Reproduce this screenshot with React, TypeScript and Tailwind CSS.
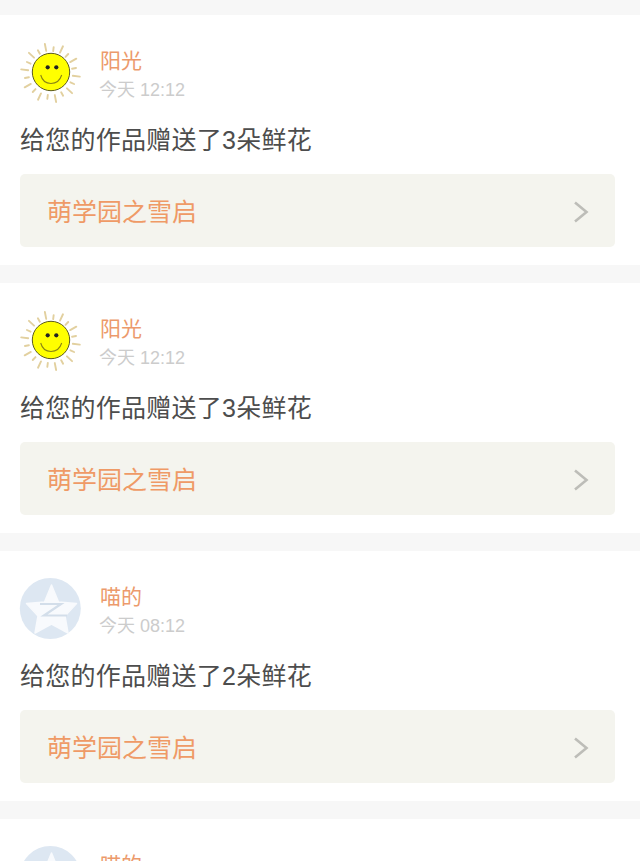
import React from 'react'

const cjk = "font-['Liberation_Sans','Noto_Sans_CJK_SC',sans-serif]"

function SunAvatar() {
  const rays = Array.from({ length: 20 }, (_, i) => {
    const a = (i * 18 + 7) * (Math.PI / 180)
    const long = i % 2 === 0
    const r1 = long ? 22.5 : 22
    const r2 = long ? 29.5 : 26
    return (
      <line
        key={i}
        x1={30.5 + Math.cos(a) * r1}
        y1={30 + Math.sin(a) * r1}
        x2={30.5 + Math.cos(a) * r2}
        y2={30 + Math.sin(a) * r2}
        stroke="#e2d09f"
        strokeWidth="1.9"
        strokeLinecap="round"
      />
    )
  })
  return (
    <svg viewBox="0 0 60 60" className="h-[60px] w-[60px] shrink-0 overflow-visible">
      {rays}
      <circle cx="31" cy="29" r="18.7" fill="#ffff00" stroke="#5c5a1e" strokeWidth="1" />
      <circle cx="27.7" cy="24.3" r="2.1" fill="#222" />
      <circle cx="36.3" cy="24.3" r="2.1" fill="#222" />
      <path d="M20.7 32 Q23 40.5 31 40.5 Q39 40.5 41.7 32" fill="none" stroke="#8a8414" strokeWidth="1.1" />
    </svg>
  )
}

function StarAvatar() {
  return (
    <svg viewBox="0 1 60 60" className="h-[60px] w-[60px] shrink-0 overflow-visible">
      <circle cx="30.3" cy="30.5" r="30.5" fill="#dde7f2" />
      <path
        d="M31.5 7 L38.5 24 L56.5 25.5 L45 38 L48 55 L31.5 46 L15 55 L18 38 L6.5 25.5 L24.5 24 Z"
        fill="#f8fafd"
        stroke="#f8fafd"
        strokeWidth="1.5"
        strokeLinejoin="round"
      />
      <path d="M20 26 H41 L24 37.5 H47" fill="none" stroke="#d3deea" strokeWidth="2.2" />
    </svg>
  )
}

function NoticeCard({ name, time, message, avatar }: { name: string; time: string; message: string; avatar: React.ReactNode }) {
  return (
    <div className="h-[250px] shrink-0 bg-white px-5 pt-7">
      <div className="flex h-[60px] items-start gap-5">
        {avatar}
        <div className="pt-[5px]">
          <div className="text-[21px] leading-[26px] text-[#ec9a6c]">{name}</div>
          <div className="-ml-px mt-[3px] text-[18px] leading-[26px] text-[#cccccc]">{time}</div>
        </div>
      </div>
      <div className="mt-[21px] text-[25px] leading-[32px] tracking-[0.25px] text-[#4d4d4d]">{message}</div>
      <div className="mt-[18px] flex h-[73px] w-[595px] items-center justify-between rounded-[5px] bg-[#f4f4ee] pl-[27px] pr-[26px] pt-[3px]">
        <span className="relative top-px text-[25px] text-[#ef9a66]">萌学园之雪启</span>
        <svg viewBox="0 0 16 24" className="h-6 w-4">
          <path d="M2 2.5 L13.5 12 L2 21.5" fill="none" stroke="#bdbdb8" strokeWidth="2.6" />
        </svg>
      </div>
    </div>
  )
}

export default function App() {
  return (
    <div className={`${cjk} flex h-[861px] w-[640px] flex-col gap-[18px] overflow-hidden bg-[#f7f7f7] pt-[15px]`}>
      <NoticeCard name="阳光" time="今天 12:12" message="给您的作品赠送了3朵鲜花" avatar={<SunAvatar />} />
      <NoticeCard name="阳光" time="今天 12:12" message="给您的作品赠送了3朵鲜花" avatar={<SunAvatar />} />
      <NoticeCard name="喵的" time="今天 08:12" message="给您的作品赠送了2朵鲜花" avatar={<StarAvatar />} />
      <NoticeCard name="喵的" time="今天 08:12" message="给您的作品赠送了2朵鲜花" avatar={<StarAvatar />} />
    </div>
  )
}
